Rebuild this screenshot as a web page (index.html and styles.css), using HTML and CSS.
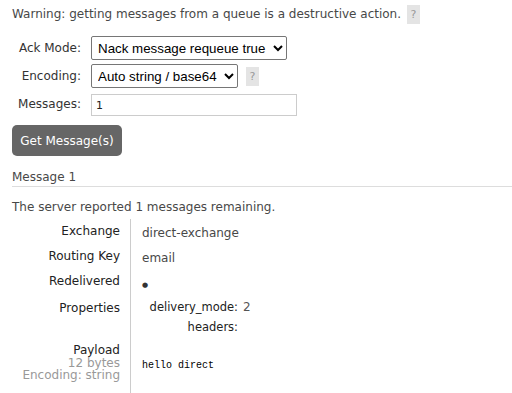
FILE: index.html
```html
<!DOCTYPE html>
<html lang="en">
<head>
  <meta charset="UTF-8" />
  <title>Get messages</title>
  <link rel="stylesheet" href="styles.css">
</head>
<body>
  <p class="warning">Warning: getting messages from a queue is a destructive action. <span class="help">?</span></p>

  <div class="form-grid">
    <label>Ack Mode:</label>
    <div class="field">
      <select class="sel-ack">
        <option>Nack message requeue true</option>
      </select>
    </div>
    <label>Encoding:</label>
    <div class="field">
      <select class="sel-enc">
        <option>Auto string / base64</option>
      </select>
      <span class="help">?</span>
    </div>
    <label>Messages:</label>
    <div class="field">
      <input type="text" value="1" class="msg-count">
    </div>
  </div>

  <button class="get-btn">Get Message(s)</button>

  <h3 class="msg-title">Message 1</h3>
  <p class="remaining">The server reported 1 messages remaining.</p>

  <div class="facts">
    <div class="key">Exchange</div>
    <div class="val">direct-exchange</div>
    <div class="key">Routing Key</div>
    <div class="val">email</div>
    <div class="key">Redelivered</div>
    <div class="val"><span class="dot">&#9679;</span></div>
    <div class="key">Properties</div>
    <div class="val">
      <div class="props">
        <span class="pk">delivery_mode:</span><span class="pv">2</span>
        <span class="pk">headers:</span><span class="pv"></span>
      </div>
    </div>
    <div class="key payload">Payload<br><sub>12 bytes</sub><br><sub>Encoding: string</sub></div>
    <div class="val"><pre>hello direct</pre></div>
  </div>
</body>
</html>
```

FILE: styles.css
```css
body {
  margin: 0;
  padding: 0 0 0 12px;
  font-family: "DejaVu Sans", Verdana, sans-serif;
  font-size: 12px;
  color: #484848;
  background: #fff;
}
.warning {
  margin: 5px 0 0;
  line-height: 19px;
}
.help {
  display: inline-block;
  width: 13px;
  height: 19px;
  line-height: 19px;
  text-align: center;
  background: #e4e4e4;
  color: #999;
  font-size: 11px;
  margin-left: 2px;
}
.form-grid {
  display: grid;
  grid-template-columns: 69px auto;
  column-gap: 10px;
  row-gap: 4px;
  margin-top: 12px;
  align-items: center;
}
.form-grid label {
  text-align: right;
  color: #333;
}
.field {
  display: flex;
  align-items: center;
  gap: 6px;
}
select {
  font-family: "Liberation Sans", Arial, sans-serif;
  font-size: 13.33px;
  height: 24px;
  border: 1px solid #767676;
  border-radius: 2px;
  background: #fff;
  color: #000;
  padding: 0 2px;
}
.sel-ack { width: 196px; }
.sel-enc { width: 147px; }
.msg-count {
  width: 206px;
  height: 22px;
  box-sizing: border-box;
  border: 1px solid #ccc;
  font-family: "DejaVu Sans", Verdana, sans-serif;
  font-size: 11px;
  color: #222;
  padding: 0 4px;
  margin-top: 2px;
}
.get-btn {
  display: block;
  margin-top: 9px;
  width: 110px;
  height: 31px;
  border: none;
  border-radius: 5px;
  background: #666;
  color: #fff;
  font-family: "DejaVu Sans", Verdana, sans-serif;
  font-size: 12px;
  padding: 0;
}
.msg-title {
  margin: 13px 0 0;
  font-weight: normal;
  font-size: 12px;
  line-height: 16px;
  color: #484848;
  border-bottom: 1px solid #ddd;
  padding-bottom: 1px;
}
.remaining {
  margin: 12px 0 0;
  line-height: 16px;
}
.facts {
  display: grid;
  grid-template-columns: 118px 1fr;
  margin-top: 4px;
}
.key {
  text-align: right;
  padding: 6px 10px 6px 0;
  line-height: 13px;
  color: #222;
}
.val {
  border-left: 1px solid #ccc;
  padding: 8px 10px 4px 11px;
  line-height: 13px;
}
.dot {
  font-size: 7px;
  color: #333;
}
.props {
  display: grid;
  grid-template-columns: 96px auto;
  column-gap: 5px;
  row-gap: 7px;
  margin-top: -3px;
  font-size: 11.5px;
  color: #222;
}
.pk { text-align: right; }
.pv { color: #555; font-size: 12px; }
.payload {
  padding-top: 6px;
  padding-bottom: 14px;
  line-height: 12.5px;
}
.payload sub {
  vertical-align: baseline;
  font-size: 12px;
  color: #999;
  line-height: 12.5px;
}
pre {
  margin: 13px 0 0;
  font-family: "Liberation Mono", monospace;
  font-size: 10px;
  color: #000;
}
```
